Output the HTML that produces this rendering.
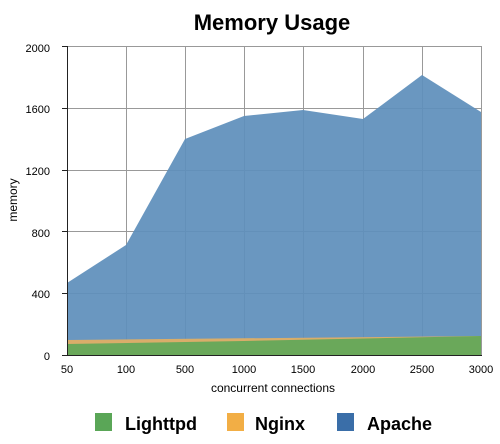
<!DOCTYPE html><html><head><style>body{margin:0;background:#fff}svg{display:block}text{font-family:"Liberation Sans",sans-serif}</style></head><body>
<svg width="500" height="444" viewBox="0 0 500 444">
<text x="272" y="30" font-size="22" font-weight="bold" text-anchor="middle">Memory Usage</text>
<g stroke="#999" stroke-width="1">
<line x1="67" y1="46.5" x2="481" y2="46.5"/><line x1="67" y1="108.5" x2="481" y2="108.5"/><line x1="67" y1="170.5" x2="481" y2="170.5"/><line x1="67" y1="231.5" x2="481" y2="231.5"/><line x1="67" y1="293.5" x2="481" y2="293.5"/>
<line x1="126.5" y1="46" x2="126.5" y2="355"/><line x1="185.5" y1="46" x2="185.5" y2="355"/><line x1="244.5" y1="46" x2="244.5" y2="355"/><line x1="303.5" y1="46" x2="303.5" y2="355"/><line x1="363.5" y1="46" x2="363.5" y2="355"/><line x1="422.5" y1="46" x2="422.5" y2="355"/><line x1="481.5" y1="46" x2="481.5" y2="355"/>
</g>
<polygon fill="#5f8fbb" fill-opacity="0.93" points="67,283 126,245 185,139 244,116 303,110 363,119 422,75 481,112 481,355 67,355"/>
<polygon fill="#d9ad6a" points="67,340 481,336 481,355 67,355"/>
<polygon fill="#6aa85a" points="67,344 244,341 481,336 481,355 67,355"/>
<line x1="67.5" y1="46" x2="67.5" y2="355" stroke="#222"/>
<line x1="62" y1="355.5" x2="482" y2="355.5" stroke="#222"/>
<g stroke="#222"><line x1="62" y1="46.5" x2="67" y2="46.5"/><line x1="62" y1="108.5" x2="67" y2="108.5"/><line x1="62" y1="170.5" x2="67" y2="170.5"/><line x1="62" y1="231.5" x2="67" y2="231.5"/><line x1="62" y1="293.5" x2="67" y2="293.5"/></g>
<g font-size="11" text-anchor="end"><text x="50" y="52">2000</text><text x="50" y="113">1600</text><text x="50" y="175">1200</text><text x="50" y="237">800</text><text x="50" y="298">400</text><text x="50" y="360">0</text></g>
<g font-size="11" text-anchor="middle"><text x="67" y="373">50</text><text x="126" y="373">100</text><text x="185" y="373">500</text><text x="244" y="373">1000</text><text x="303" y="373">1500</text><text x="363" y="373">2000</text><text x="422" y="373">2500</text><text x="481" y="373">3000</text></g>
<text x="273" y="392" font-size="12" text-anchor="middle">concurrent connections</text>
<text transform="translate(17,200) rotate(-90)" font-size="12" text-anchor="middle">memory</text>
<rect x="95" y="413" width="17" height="18" fill="#5aa657"/><text x="125" y="430" font-size="18" font-weight="bold">Lighttpd</text>
<rect x="227" y="413" width="17" height="18" fill="#f2ae45"/><text x="255" y="430" font-size="18" font-weight="bold">Nginx</text>
<rect x="337" y="413" width="17" height="18" fill="#3a6ea8"/><text x="367" y="430" font-size="18" font-weight="bold">Apache</text>
</svg></body></html>
